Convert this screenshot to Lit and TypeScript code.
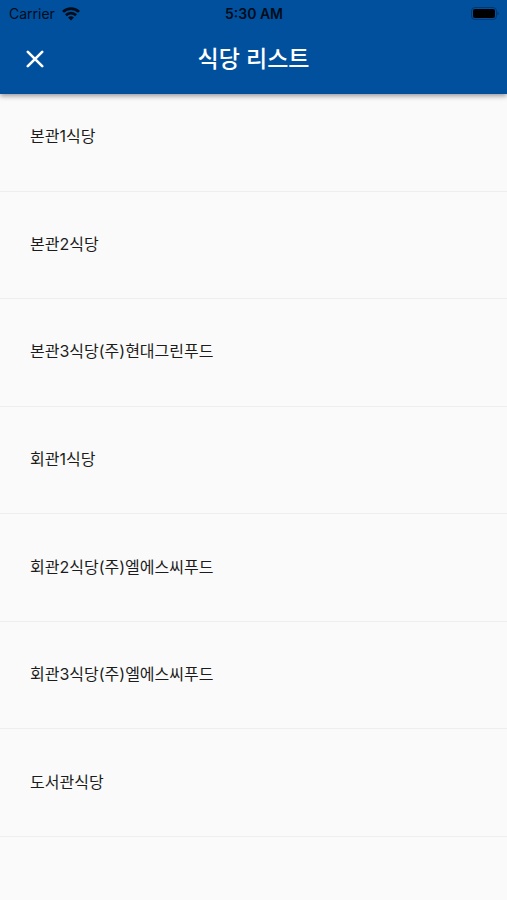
import { LitElement, html, css } from "lit";
import { customElement } from "lit/decorators.js";

const places = [
  "본관1식당",
  "본관2식당",
  "본관3식당(주)현대그린푸드",
  "회관1식당",
  "회관2식당(주)엘에스씨푸드",
  "회관3식당(주)엘에스씨푸드",
  "도서관식당",
];

@customElement("app-root")
export class AppRoot extends LitElement {
  static styles = css`
    :host {
      display: block;
      min-height: 100vh;
      background: #fafafa;
      color: #1c1c1c;
      font-family: Inter, "Noto Sans CJK KR", sans-serif;
    }
    .top {
      position: relative;
      z-index: 1;
      background: #00509e;
      box-shadow: 0 2px 5px rgba(0, 0, 0, 0.4);
    }
    .status {
      display: grid;
      grid-template-columns: 1fr auto 1fr;
      align-items: center;
      height: 27px;
      padding: 0 8px 0 9px;
      font-size: 14px;
      line-height: 20px;
      color: #020c18;
    }
    .carrier {
      display: flex;
      align-items: center;
      gap: 7px;
    }
    .time {
      font-weight: 600;
    }
    .battery {
      justify-self: end;
    }
    svg {
      display: block;
    }
    .bar {
      display: grid;
      grid-template-columns: 70px 1fr 70px;
      align-items: center;
      box-sizing: border-box;
      height: 67px;
      padding-bottom: 3px;
    }
    .close {
      display: grid;
      place-items: center;
      height: 48px;
      padding: 0;
      border: 0;
      background: none;
      color: #fff;
    }
    h1 {
      margin: 0;
      font-size: 23px;
      line-height: 32px;
      font-weight: 500;
      text-align: center;
      color: #fff;
    }
    /* The first row starts underneath the bar; all rows share the height. */
    ul {
      display: grid;
      grid-auto-rows: 1fr;
      min-height: 753px;
      margin: -10px 0 0;
      padding: 0;
      list-style: none;
    }
    .row {
      display: flex;
      align-items: center;
      padding: 0 30px 2px;
      border-bottom: 1px solid #eeeeee;
      font-size: 16px;
      line-height: 24px;
    }
  `;

  render() {
    return html`
      <header class="top">
        <div class="status">
          <span class="carrier">
            Carrier
            <svg width="18" height="14" viewBox="0 0 18 14" aria-hidden="true">
              <g fill="none" stroke="currentColor" stroke-width="2.7">
                <path d="M1 4.9a11.4 11.4 0 0 1 16 0" />
                <path d="M3.9 8.2a7.2 7.2 0 0 1 10.2 0" />
              </g>
              <path d="M9 13.6 6 10.6a4.3 4.3 0 0 1 6 0z" fill="currentColor" />
            </svg>
          </span>
          <span class="time">5:30 AM</span>
          <svg class="battery" width="28" height="14" viewBox="0 0 28 14" aria-hidden="true">
            <rect x="0.5" y="0.5" width="25" height="12" rx="3.5" fill="none" stroke="currentColor" opacity="0.35" />
            <rect x="2" y="2" width="22" height="9" rx="2" fill="#000" />
            <path d="M26.5 4.5q2.4 2 0 4z" fill="currentColor" opacity="0.4" />
          </svg>
        </div>
        <div class="bar">
          <button class="close" aria-label="닫기">
            <svg width="18" height="18" viewBox="0 0 18 18" aria-hidden="true">
              <path d="M1.8 1.8 16.2 16.2M16.2 1.8 1.8 16.2" stroke="currentColor" stroke-width="2.6" stroke-linecap="round" />
            </svg>
          </button>
          <h1>식당 리스트</h1>
        </div>
      </header>
      <ul>
        ${places.map((name) => html`<li class="row">${name}</li>`)}
      </ul>
    `;
  }
}
